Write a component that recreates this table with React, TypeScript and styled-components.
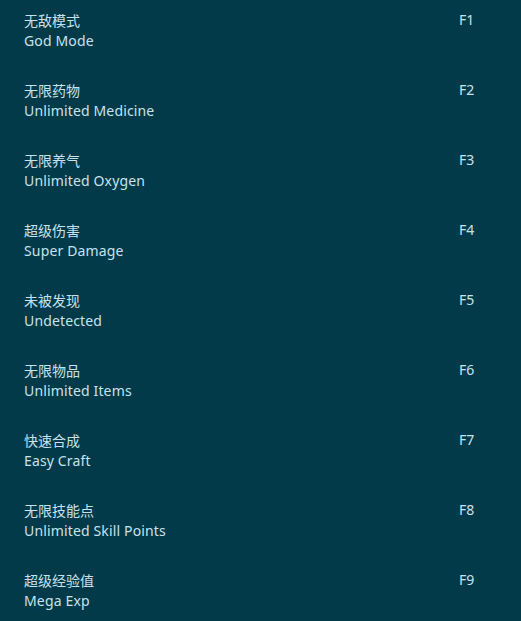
import React from "react";
import styled, { createGlobalStyle } from "styled-components";

const Global = createGlobalStyle`
  html, body { margin: 0; padding: 0; background: #023a4a; }
  body { font-family: "Noto Sans", "Noto Sans CJK SC", sans-serif; }
`;

const Page = styled.div`
  width: 521px;
  height: 621px;
  overflow: hidden;
  background: #023a4a;
  padding: 10px 0 0 24px;
  box-sizing: border-box;
  display: flex;
  flex-direction: column;
  gap: 29px;
`;

const Row = styled.div`
  display: grid;
  grid-template-columns: 435px auto;
  color: #c8e1ea;
`;

const Names = styled.div`
  display: flex;
  flex-direction: column;
`;

const Cn = styled.div`
  font-family: "Noto Sans CJK SC", sans-serif;
  font-size: 14px;
  line-height: 20px;
`;

const En = styled.div`
  font-family: "Noto Sans", "Open Sans", sans-serif;
  font-size: 14px;
  line-height: 20px;
  padding-top: 1px;
  letter-spacing: 0.15px;
`;

const Key = styled.div`
  font-family: "Noto Sans", sans-serif;
  font-size: 14px;
  line-height: 20px;
`;

const items = [
  ["无敌模式", "God Mode", "F1"],
  ["无限药物", "Unlimited Medicine", "F2"],
  ["无限养气", "Unlimited Oxygen", "F3"],
  ["超级伤害", "Super Damage", "F4"],
  ["未被发现", "Undetected", "F5"],
  ["无限物品", "Unlimited Items", "F6"],
  ["快速合成", "Easy Craft", "F7"],
  ["无限技能点", "Unlimited Skill Points", "F8"],
  ["超级经验值", "Mega Exp", "F9"],
];

export default function App() {
  return (
    <>
      <Global />
      <Page>
        {items.map(([cn, en, k]) => (
          <Row key={k}>
            <Names>
              <Cn>{cn}</Cn>
              <En>{en}</En>
            </Names>
            <Key>{k}</Key>
          </Row>
        ))}
      </Page>
    </>
  );
}
